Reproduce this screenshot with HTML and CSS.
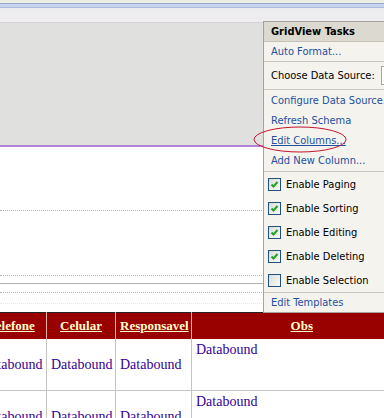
FILE: index.html
```html
<!DOCTYPE html>
<html lang="pt">
<head>
    <meta charset="UTF-8">
    <meta name="viewport" content="width=device-width, initial-scale=1.0">
    <title>GridView Tasks</title>
    <link rel="stylesheet" href="styles.css">
</head>
<body>
    <div class="strip-top"></div>
    <div class="strip-blue"></div>
    <div class="toolbar"></div>
    <div class="gray-area"></div>
    <div class="purple-line"></div>
    <div class="white-area">
        <div class="gap" style="height: 63px"></div>
        <div class="dots"></div>
        <div class="gap" style="height: 64px"></div>
        <div class="dots"></div>
        <div class="gap" style="height: 7px"></div>
        <div class="solid"></div>
        <div class="gap" style="height: 8px"></div>
        <div class="dots"></div>
        <div class="gap" style="height: 10px"></div>
        <div class="dots faint"></div>
        <div class="gap" style="height: 8px"></div>
    </div>

    <table class="grid">
        <colgroup>
            <col style="width: 70px">
            <col style="width: 69px">
            <col style="width: 76px">
            <col style="width: 220px">
        </colgroup>
        <thead>
            <tr>
                <th><a href="#">Telefone</a></th>
                <th><a href="#">Celular</a></th>
                <th><a href="#">Responsavel</a></th>
                <th><a href="#">Obs</a></th>
            </tr>
        </thead>
        <tbody>
            <tr>
                <td>Databound</td>
                <td>Databound</td>
                <td>Databound</td>
                <td class="obs">Databound</td>
            </tr>
            <tr>
                <td>Databound</td>
                <td>Databound</td>
                <td>Databound</td>
                <td class="obs">Databound</td>
            </tr>
        </tbody>
    </table>

    <div class="tasks">
        <div class="tasks-title">GridView Tasks</div>
        <div class="tasks-section">
            <div class="task-row"><a href="#">Auto Format...</a></div>
        </div>
        <div class="tasks-section source">
            <div class="task-row">
                <span>Choose Data Source:</span>
                <span class="select"></span>
            </div>
        </div>
        <div class="tasks-section links">
            <div class="task-row"><a href="#">Configure Data Source...</a></div>
            <div class="task-row"><a href="#">Refresh Schema</a></div>
            <div class="task-row"><a href="#" class="hover">Edit Columns...</a></div>
            <div class="task-row"><a href="#">Add New Column...</a></div>
        </div>
        <div class="tasks-section">
            <label class="check-row"><span class="box checked"></span>Enable Paging</label>
            <label class="check-row"><span class="box checked"></span>Enable Sorting</label>
            <label class="check-row"><span class="box checked"></span>Enable Editing</label>
            <label class="check-row"><span class="box checked"></span>Enable Deleting</label>
            <label class="check-row"><span class="box"></span>Enable Selection</label>
        </div>
        <div class="tasks-section last">
            <div class="task-row"><a href="#">Edit Templates</a></div>
        </div>
    </div>

    <svg class="circle" width="98" height="30" viewBox="0 0 98 30">
        <ellipse cx="48" cy="14.5" rx="46" ry="12.5" fill="none" stroke="#c4142c" stroke-width="1"/>
    </svg>
</body>
</html>
```

FILE: styles.css
```css
html, body {
    margin: 0;
    padding: 0;
    overflow: hidden;
    background: #fff;
}
body {
    position: relative;
    width: 384px;
    height: 418px;
}
.strip-top {
    height: 3px;
    background: #efeee6;
}
.strip-blue {
    height: 3px;
    background: #c6d4f0;
    border-top: 1px solid #97a9cc;
    border-bottom: 1px solid #aebcdc;
}
.toolbar {
    height: 14px;
    background: linear-gradient(#ecebee, #efedf0);
    border-bottom: 1px solid #d8d0d8;
}
.gray-area {
    height: 122px;
    background: #e0e0de;
}
.purple-line {
    height: 2px;
    background: #b184d6;
}
.white-area {
    background: #fff;
}
.dots {
    border-top: 1px dotted #b4b4b4;
}
.dots.faint {
    border-top-color: #e6e6e6;
}
.solid {
    border-top: 1px solid #b0b0b0;
}

/* grid */
.grid {
    margin-left: -24px;
    width: 435px;
    table-layout: fixed;
    border-collapse: collapse;
    border-top: 1px solid #222;
    font-family: "Liberation Serif", "Times New Roman", serif;
}
.grid th {
    height: 26px;
    padding: 0 4px;
    background: #990000;
    border-left: 1px solid #e8b4a8;
    font-size: 13px;
    font-weight: bold;
    text-align: center;
    white-space: nowrap;
}
.grid th a {
    color: #ffffcc;
    text-decoration: underline;
}
.grid td {
    height: 48px;
    padding: 0 4px;
    border-left: 1px solid #c4c4c4;
    border-bottom: 1px solid #c4c4c4;
    color: #330099;
    font-size: 14px;
    white-space: nowrap;
    vertical-align: middle;
}
.grid td.obs {
    vertical-align: top;
    padding-top: 3px;
}

/* smart tag panel */
.tasks {
    position: absolute;
    left: 263px;
    top: 21px;
    width: 132px;
    background: #f4f3ee;
    border: 1px solid #a4a29a;
    font-family: "DejaVu Sans Condensed", "DejaVu Sans", sans-serif;
    font-size: 11px;
    color: #000;
}
.tasks-title {
    height: 19px;
    line-height: 19px;
    padding-left: 7px;
    background: #dcd9d1;
    border-bottom: 1px solid #c6c2b8;
    font-weight: bold;
}
.tasks-section {
    border-bottom: 1px solid #cbc7bd;
}
.tasks-section.last {
    border-bottom: none;
}
.task-row {
    display: flex;
    align-items: center;
    height: 19px;
    padding-left: 7px;
    white-space: nowrap;
}
.source .task-row {
    height: 27px;
}
.links .task-row {
    height: 20px;
}
.links {
    padding-bottom: 1px;
}
.tasks a {
    color: #1f4f9f;
    text-decoration: none;
}
.tasks a.hover {
    text-decoration: underline;
}
.select {
    flex: none;
    margin-left: 6px;
    width: 20px;
    height: 17px;
    background: #fff;
    border: 1px solid #a7a6aa;
}
.check-row {
    display: flex;
    align-items: center;
    height: 24px;
    padding-left: 4px;
    white-space: nowrap;
}
.box {
    width: 11px;
    height: 11px;
    margin-right: 5px;
    border: 1px solid #1c5180;
    background: linear-gradient(135deg, #dcdcd6, #fbfbf9);
}
.box.checked {
    background: url("data:image/svg+xml;utf8,<svg xmlns='http://www.w3.org/2000/svg' width='11' height='11'><path d='M2.5 5.5 L4.5 7.5 L8.5 3' fill='none' stroke='%2321a121' stroke-width='2'/></svg>") no-repeat,
        linear-gradient(135deg, #dcdcd6, #fbfbf9);
}

.circle {
    position: absolute;
    left: 252px;
    top: 125px;
}
```
